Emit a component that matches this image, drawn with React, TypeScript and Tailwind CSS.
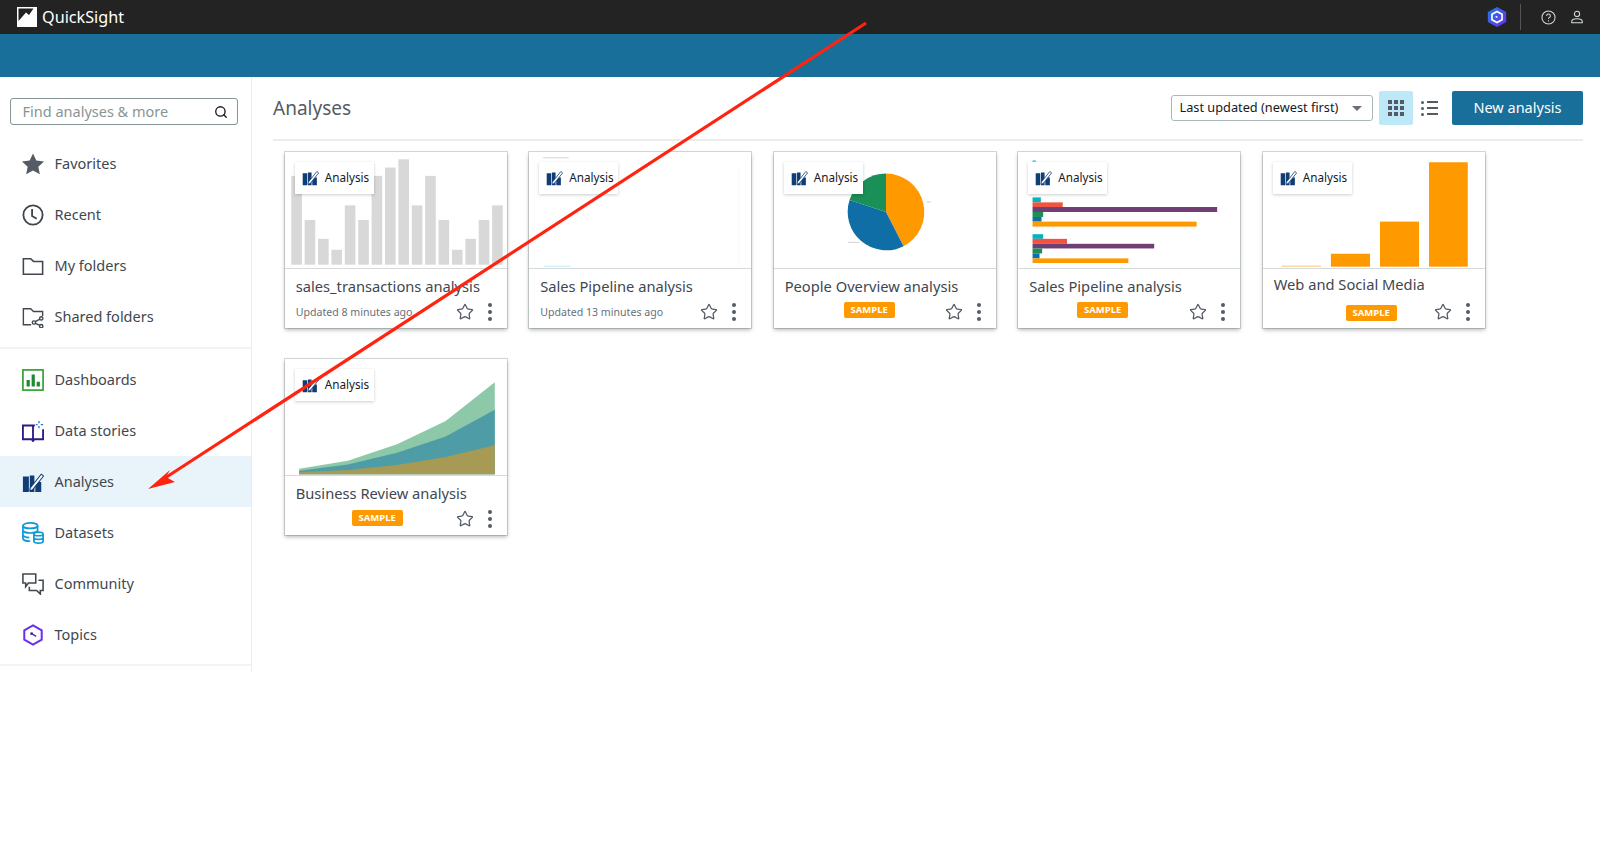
import { Search, Star } from "lucide-react";
import type { ReactNode } from "react";

function AnalysisIcon({ className }: { className: string }) {
  return (
    <svg viewBox="0 0 24 24" className={className}>
      <path d="M1 6h6.500v17H1zM8.500 5h5v18h-5zM14.500 12H21v11h-6.500z" fill="#0f3d75" />
      <path d="M9 18.500 21 3.500l2.500 2-12 15-3 1z" fill="#fff" stroke="#0f3d75" strokeWidth="1.100" />
    </svg>
  );
}

const navTop: { label: string; icon: ReactNode }[] = [
  {
    label: "Favorites",
    icon: (
      <svg viewBox="0 0 24 24" className="h-[22px] w-[22px]">
        <path d="m12 .5 3.600 7.700 8.400 1-6.200 5.700 1.700 8.300L12 19l-7.500 4.200 1.700-8.300L0 9.200l8.400-1z" fill="#545b64" />
      </svg>
    ),
  },
  {
    label: "Recent",
    icon: (
      <svg viewBox="0 0 24 24" fill="none" stroke="#414750" strokeWidth="2" className="h-[22px] w-[22px]">
        <circle cx="12" cy="12" r="10.500" />
        <path d="M11 5.500V13l5 3" />
      </svg>
    ),
  },
  {
    label: "My folders",
    icon: (
      <svg viewBox="0 0 24 24" fill="none" stroke="#414750" strokeWidth="1.700" className="h-[22px] w-[22px]">
        <path d="M1.500 4h8l3 3h10v14h-21z" />
      </svg>
    ),
  },
  {
    label: "Shared folders",
    icon: (
      <svg viewBox="0 0 24 24" fill="none" stroke="#414750" strokeWidth="1.500" className="h-[22px] w-[22px]">
        <path d="M10 20.500H1.500V3h8l3 3h10v5" />
        <circle cx="13" cy="18" r="1.800" />
        <circle cx="21" cy="13.500" r="1.800" />
        <circle cx="21" cy="22" r="1.800" />
        <path d="m14.500 17 5-2.600M14.500 19l5 2.200" />
      </svg>
    ),
  },
];

const navBottom: { label: string; active?: boolean; icon: ReactNode }[] = [
  {
    label: "Dashboards",
    icon: (
      <svg viewBox="0 0 24 24" className="h-[22px] w-[22px]">
        <rect x="1" y="1" width="22" height="22" fill="none" stroke="#2ca02c" strokeWidth="1.800" />
        <path d="M5 12h3.500v7H5zM10.500 6H14v13h-3.500zM16 14h3.500v5H16z" fill="#1f8a2f" />
      </svg>
    ),
  },
  {
    label: "Data stories",
    icon: (
      <svg viewBox="0 0 24 24" fill="none" stroke="#2e1a87" strokeWidth="2" className="h-[22px] w-[22px]">
        <path d="M14 6H1v15h9.500l1.500 2 1.500-2H23V10M12 6v15" />
        <path d="M18.500 1v2.500M18.500 6.500V9M15 5h2M20.500 5H23" stroke="#2a6fc9" strokeWidth="1.400" />
      </svg>
    ),
  },
  {
    label: "Analyses",
    active: true,
    icon: <AnalysisIcon className="h-[22px] w-[22px]" />,
  },
  {
    label: "Datasets",
    icon: (
      <svg viewBox="0 0 24 24" fill="none" stroke="#0f9bd7" strokeWidth="1.900" className="h-[22px] w-[22px]">
        <ellipse cx="9" cy="4" rx="8" ry="3" />
        <path d="M1 4v14c0 1.500 3 3 8 3M17 4v6M1 9c0 1.500 3 3 8 3s8-1.500 8-3M1 14c0 1.500 3 3 7 3" />
        <ellipse cx="18" cy="13" rx="5" ry="2" />
        <path d="M13 13v8c0 1 2 2 5 2s5-1 5-2v-8M13 17c0 1 2 2 5 2s5-1 5-2" />
      </svg>
    ),
  },
  {
    label: "Community",
    icon: (
      <svg viewBox="0 0 24 24" fill="none" stroke="#414750" strokeWidth="1.700" className="h-[22px] w-[22px]">
        <path d="M1 1h14v10H7l-3 4v-4H1z" />
        <path d="M18 8h5v11h-3v4l-4-4H8v-4" />
      </svg>
    ),
  },
  {
    label: "Topics",
    icon: (
      <svg viewBox="0 0 24 24" fill="none" stroke="#6a2ff0" strokeWidth="2.200" className="h-[22px] w-[22px]">
        <path d="m12 1.500 9.500 5.500v10L12 22.500 2.500 17V7z" />
        <circle cx="10.500" cy="10.500" r="1.600" fill="#4b2aa8" stroke="none" />
        <path d="m10.500 10.500 5 3" strokeWidth="1.600" stroke="#4b2aa8" />
      </svg>
    ),
  },
];

function NavRow({ label, icon, active }: { label: string; icon: ReactNode; active?: boolean }) {
  return (
    <div className={active ? "flex h-[51px] items-center bg-[#e8f4fa] pl-[22px]" : "flex h-[51px] items-center pl-[22px]"}>
      <span className="flex w-[22px] items-center justify-center">{icon}</span>
      <span className="ml-[10.500px] text-[14.500px] text-[#414750]">{label}</span>
    </div>
  );
}

const barTops = [107, 240, 297, 330, 196, 240, 107, 82, 57, 196, 107, 240, 330, 297, 240, 196];

function SalesThumb() {
  return (
    <svg viewBox="44 35 666 350" className="h-[116px] w-full">
      {barTops.map((top, i) => (
        <rect key={i} x={61 + i * 40.4} y={top} width="32" height={375 - top} fill="#d8d8d8" />
      ))}
    </svg>
  );
}

function PipelineEmptyThumb() {
  return (
    <svg viewBox="777 35 666 350" className="h-[116px] w-full">
      <rect x="818" y="51" width="77" height="3" fill="#d5d5d5" />
      <rect x="820" y="378" width="80" height="4" fill="#d4eef8" />
      <rect x="1407" y="85" width="2" height="295" fill="#f5f5f5" />
    </svg>
  );
}

function PieThumb() {
  return (
    <svg viewBox="41 35 666 350" className="h-[116px] w-full">
      <path d="M377 216V100A116 116 0 0 1 430 319Z" fill="#ff9900" />
      <path d="M377 216 430 319A116 116 0 0 1 267 180Z" fill="#0f6ea5" />
      <path d="M377 216 267 180A116 116 0 0 1 377 100Z" fill="#1a8f58" />
      <rect x="500" y="184" width="12" height="3" fill="#d0d0d0" />
      <rect x="262" y="306" width="34" height="3" fill="#d0d0d0" />
    </svg>
  );
}

const hbars: [number, number, number, string][] = [
  [172, 187, 841, "#00b5bf"],
  [187, 201, 907, "#f0533f"],
  [201, 216, 1373, "#6f3f74"],
  [216, 231, 848, "#1a8f58"],
  [231, 245, 843, "#0f6ea5"],
  [245, 260, 1311, "#ff9900"],
  [283, 297, 848, "#00b5bf"],
  [297, 312, 920, "#f0533f"],
  [312, 326, 1183, "#6f3f74"],
  [326, 341, 845, "#1a8f58"],
  [341, 356, 837, "#0f6ea5"],
  [356, 370, 1105, "#ff9900"],
];

function PipelineBarsThumb() {
  return (
    <svg viewBox="774 35 666 350" className="h-[116px] w-full">
      <rect x="816" y="60" width="10" height="8" fill="#5fcfd8" />
      {hbars.map(([y1, y2, x2, fill], i) => (
        <rect key={i} x="816" y={y1} width={x2 - 816} height={y2 - y1} fill={fill} />
      ))}
    </svg>
  );
}

function WebThumb() {
  return (
    <svg viewBox="38 35 666 350" className="h-[116px] w-full">
      <rect x="93" y="378" width="118" height="3" fill="#ffc27a" />
      <rect x="241" y="342" width="118" height="39" fill="#ff9900" />
      <rect x="389" y="245" width="118" height="136" fill="#ff9900" />
      <rect x="537" y="66" width="117" height="315" fill="#ff9900" />
    </svg>
  );
}

function AreaThumb() {
  return (
    <svg viewBox="44 25 666 350" className="h-[116px] w-full">
      <path d="M85 373V356L232 332 380 282 527 212 675 95V373Z" fill="#8dc8a8" />
      <path d="M85 373V362L232 343 380 308 527 259 675 178V373Z" fill="#4e9da6" />
      <path d="M85 373V366L232 360 380 345 527 321 675 285V373Z" fill="#a69a55" />
    </svg>
  );
}

type CardData = {
  title: string;
  thumb: ReactNode;
  updated?: string;
  sampleClass?: string;
  webRow?: boolean;
};

const cards: CardData[] = [
  { title: "sales_transactions analysis", thumb: <SalesThumb />, updated: "Updated 8 minutes ago" },
  { title: "Sales Pipeline analysis", thumb: <PipelineEmptyThumb />, updated: "Updated 13 minutes ago" },
  { title: "People Overview analysis", thumb: <PieThumb />, sampleClass: "ml-[59px] mb-[4px]" },
  { title: "Sales Pipeline analysis", thumb: <PipelineBarsThumb />, sampleClass: "ml-[48px] mb-[4px]" },
  { title: "Web and Social Media", thumb: <WebThumb />, sampleClass: "ml-[72px] mt-[1px]", webRow: true },
  { title: "Business Review analysis", thumb: <AreaThumb />, sampleClass: "ml-[56px] mb-[3px]" },
];

function Card({ card }: { card: CardData }) {
  return (
    <div className="relative h-[176px] w-[222px] bg-white shadow-[0_0_0_1px_rgba(0,28,36,0.16),0_2px_4px_rgba(0,0,0,0.28)]">
      <div className="h-[117px] border-b border-[#d5dbdb]">{card.thumb}</div>
      <div className="absolute left-[10px] top-[10px] flex h-[32px] w-[79px] items-center bg-white pl-[7px] shadow-[0_1px_3px_rgba(0,0,0,0.2)]">
        <AnalysisIcon className="h-[17px] w-[17px]" />
        <span className="ml-[6px] text-[11.700px] text-[#16191f]">Analysis</span>
      </div>
      <div className="px-[11px]">
        <div className={card.webRow ? "h-[33.500px] pt-[4px] text-[14.700px] leading-[22px] text-[#414750]" : "h-[33.500px] pt-[6px] text-[14.700px] leading-[22px] text-[#414750]"}>
          {card.title}
        </div>
        <div className="flex h-[20px] items-center">
          {card.updated && <span className="mt-[2px] text-[10.600px] text-[#687078]">{card.updated}</span>}
          {card.sampleClass && (
            <span className={`flex h-[16px] w-[51px] items-center justify-center rounded-[2px] bg-[#ff9900] text-[9.500px] font-bold text-white ${card.sampleClass}`}>
              SAMPLE
            </span>
          )}
          <Star className="ml-auto h-[18px] w-[18px] text-[#545b64]" strokeWidth={1.700} />
          <svg viewBox="0 0 20 20" className="ml-[6px] mr-[-4px] h-[20px] w-[20px]" fill="#545b64">
            <circle cx="10" cy="3" r="2" />
            <circle cx="10" cy="10" r="2" />
            <circle cx="10" cy="17" r="2" />
          </svg>
        </div>
      </div>
    </div>
  );
}

export default function App() {
  return (
    <div className="relative h-[867px] overflow-hidden bg-white font-['Noto_Sans',sans-serif]">
      <header className="flex h-[34px] items-center bg-[#232323] pl-[17px] pr-[16px]">
        <svg viewBox="0 0 20 20" className="h-[20px] w-[20px]">
          <rect width="20" height="20" fill="#fff" />
          <path d="M1.500 1.500h15L12 8 9 5.500 1.500 14z" fill="#232323" />
        </svg>
        <span className="ml-[5px] text-[16.200px] text-white">QuickSight</span>
        <div className="ml-auto flex items-center">
          <svg viewBox="0 0 24 24" className="h-[22px] w-[22px]">
            <defs>
              <linearGradient id="qGrad" x1="0" y1="0" x2="1" y2="1">
                <stop offset="0" stopColor="#1f7be0" />
                <stop offset="1" stopColor="#6a2ff0" />
              </linearGradient>
            </defs>
            <path d="m12 1 10 5.500v11L12 23 2 17.500v-11z" fill="url(#qGrad)" />
            <path d="m12 6 5.500 3v6L12 18l-5.500-3V9z" fill="none" stroke="#fff" strokeWidth="1.800" />
            <path d="m12.500 12.500-2-1.200" stroke="#fff" strokeWidth="1.600" />
          </svg>
          <div className="ml-[12px] h-[26px] w-px bg-[#555]" />
          <svg viewBox="0 0 16 16" fill="none" stroke="#d5dbdb" strokeWidth="1.100" className="ml-[20px] h-[15px] w-[15px]">
            <circle cx="8" cy="8" r="7" />
            <path d="M6 6.300c0-2.600 4-2.600 4 0 0 1.700-2 1.500-2 3.200" />
            <path d="M8 11v1.300" />
          </svg>
          <svg viewBox="0 0 16 16" fill="none" stroke="#d5dbdb" strokeWidth="1.200" className="ml-[14px] h-[14px] w-[14px]">
            <circle cx="8" cy="4.500" r="3" />
            <path d="M2 14.500v-1.500c0-2 2-3 6-3s6 1 6 3v1.500z" />
          </svg>
        </div>
      </header>
      <div className="h-[43px] bg-[#186f99]" />
      <div className="flex">
        <aside className="h-[595px] w-[252px] shrink-0 border-r border-[#eaeded]">
          <div className="px-[10px] pt-[21px]">
            <div className="flex h-[27px] w-[228px] items-center rounded-[3px] border border-[#879596] pl-[11.500px] pr-[9px]">
              <span className="text-[14.500px] text-[#879596]">Find analyses &amp; more</span>
              <Search className="ml-auto h-[14px] w-[14px] text-[#16191f]" strokeWidth={2.300} />
            </div>
          </div>
          <nav className="mt-[13px] border-b-2 border-[#f2f3f3] pb-[4.500px]">
            {navTop.map((item) => (
              <NavRow key={item.label} label={item.label} icon={item.icon} />
            ))}
          </nav>
          <nav className="border-b-2 border-[#f2f3f3] pb-[4px] pt-[5.500px]">
            {navBottom.map((item) => (
              <NavRow key={item.label} label={item.label} icon={item.icon} active={item.active} />
            ))}
          </nav>
        </aside>
        <main className="min-w-0 flex-1 pl-[21px] pr-[17px]">
          <div className="flex h-[64px] items-center border-b-2 border-[#eaeded]">
            <h1 className="text-[19px] font-normal text-[#545b64]">Analyses</h1>
            <div className="ml-auto flex items-center">
              <div className="flex h-[26px] w-[202px] items-center rounded-[3px] border border-[#aab7b8] pl-[8px] pr-[10px]">
                <span className="text-[12.750px] text-[#16191f]">Last updated (newest first)</span>
                <span className="ml-auto h-0 w-0 border-x-[5px] border-t-[5px] border-x-transparent border-t-[#687078]" />
              </div>
              <div className="ml-[6px] flex h-[34px] w-[34px] items-center justify-center rounded-[2px] bg-[#bde8f7]">
                <div className="grid grid-cols-3 gap-[2px]">
                  {Array.from({ length: 9 }, (_, i) => (
                    <span key={i} className="h-[4px] w-[4px] bg-[#545b64]" />
                  ))}
                </div>
              </div>
              <div className="ml-[8.500px] flex w-[17px] flex-col gap-[3px]">
                {[0, 1, 2].map((i) => (
                  <div key={i} className="flex items-center gap-[3px]">
                    <span className="h-[3px] w-[3px] rounded-full bg-[#545b64]" />
                    <span className="h-[2.500px] flex-1 bg-[#545b64]" />
                  </div>
                ))}
              </div>
              <button className="ml-[14px] h-[34px] w-[131px] rounded-[2px] bg-[#186f99] text-[14.500px] text-white">New analysis</button>
            </div>
          </div>
          <div className="mt-[10.700px] flex flex-wrap gap-x-[22.500px] gap-y-[31px] pl-[11.700px]">
            {cards.map((card, i) => (
              <Card key={i} card={card} />
            ))}
          </div>
        </main>
      </div>
      {/* red annotation over the page */}
      <svg viewBox="0 0 1600 867" className="pointer-events-none absolute left-0 top-0 h-[867px] w-[1600px]">
        <path d="M866 23 165 478" stroke="#ff2410" strokeWidth="3.200" fill="none" />
        <path d="M148 489 170 470 166 477 175 482z" fill="#ff2410" />
      </svg>
    </div>
  );
}
